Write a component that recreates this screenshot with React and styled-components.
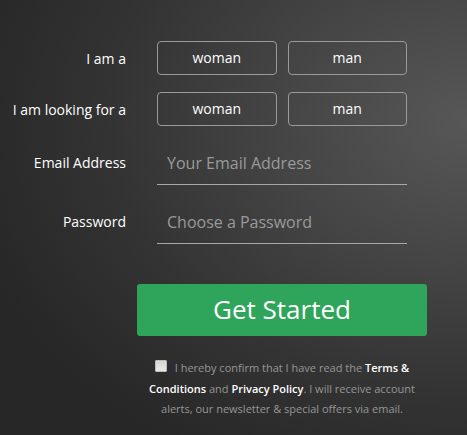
import React from "react"
import styled, { createGlobalStyle } from "styled-components"

const GlobalStyle = createGlobalStyle`
  html, body {
    margin: 0;
    padding: 0;
  }
  body {
    font-family: "Open Sans", "Liberation Sans", sans-serif;
    background: radial-gradient(ellipse 110% 90% at 100% 28%, #575757 0%, #444 38%, #333 70%, #272727 100%);
    min-height: 435px;
  }
`

const Page = styled.div`
  width: 467px;
  height: 435px;
  box-sizing: border-box;
  padding-top: 41px;
`

const Form = styled.form`
  display: grid;
  grid-template-columns: 126px 250px;
  column-gap: 31px;
  row-gap: 17px;
  align-items: center;
`

const Label = styled.label`
  color: #fff;
  font-size: 14px;
  text-align: right;
  align-self: ${p => (p.$top ? "start" : "center")};
  padding-top: ${p => (p.$top ? "10px" : "0")};
`

const Choices = styled.div`
  display: flex;
  gap: 11px;
`

const Choice = styled.button`
  width: 120px;
  height: 34px;
  box-sizing: border-box;
  background: transparent;
  border: 1px solid #9a9a9a;
  border-radius: 4px;
  color: #fff;
  font-family: inherit;
  font-size: 14px;
  padding: 0 0 2px;
  cursor: pointer;
`

const Input = styled.input`
  width: 250px;
  height: 42px;
  box-sizing: border-box;
  background: transparent;
  border: none;
  border-bottom: 1px solid #a8a8a8;
  color: #fff;
  font-family: inherit;
  font-size: 16px;
  padding: 0 10px 2px;
  outline: none;
  &::placeholder {
    color: #9a9a9a;
  }
`

const Bottom = styled.div`
  width: 290px;
  margin: 40px 0 0 137px;
  display: flex;
  flex-direction: column;
  align-items: center;
`

const Submit = styled.button`
  width: 290px;
  height: 52px;
  background: #2fa55c;
  border: none;
  border-radius: 3px;
  color: #fff;
  font-family: inherit;
  font-size: 26px;
  padding: 0 0 2px;
  cursor: pointer;
`

const Terms = styled.p`
  margin: 22px 0 0;
  padding: 0 8px;
  color: #969696;
  font-size: 11px;
  line-height: 20.5px;
  text-align: center;
  b {
    color: #fff;
    font-weight: 600;
  }
`

const Check = styled.input`
  appearance: none;
  width: 12px;
  height: 12px;
  box-sizing: border-box;
  margin: 0 5px 0 0;
  vertical-align: 0;
  background: linear-gradient(#d6d6d6, #e8e8e8);
  border: 1px solid #bcbcbc;
  border-radius: 1px;
`

export default function App() {
  return (
    <>
      <GlobalStyle />
      <Page>
        <Form onSubmit={e => e.preventDefault()}>
          <Label>I am a</Label>
          <Choices>
            <Choice type="button">woman</Choice>
            <Choice type="button">man</Choice>
          </Choices>
          <Label>I am looking for a</Label>
          <Choices>
            <Choice type="button">woman</Choice>
            <Choice type="button">man</Choice>
          </Choices>
          <Label $top>Email Address</Label>
          <Input type="email" placeholder="Your Email Address" />
          <Label $top>Password</Label>
          <Input type="password" placeholder="Choose a Password" />
        </Form>
        <Bottom>
          <Submit type="button">Get Started</Submit>
          <Terms>
            <Check type="checkbox" /> I hereby confirm that I have read the <b>Terms &amp; Conditions</b> and <b>Privacy Policy</b>. I will receive account alerts, our newsletter &amp; special offers via email.
          </Terms>
        </Bottom>
      </Page>
    </>
  )
}
